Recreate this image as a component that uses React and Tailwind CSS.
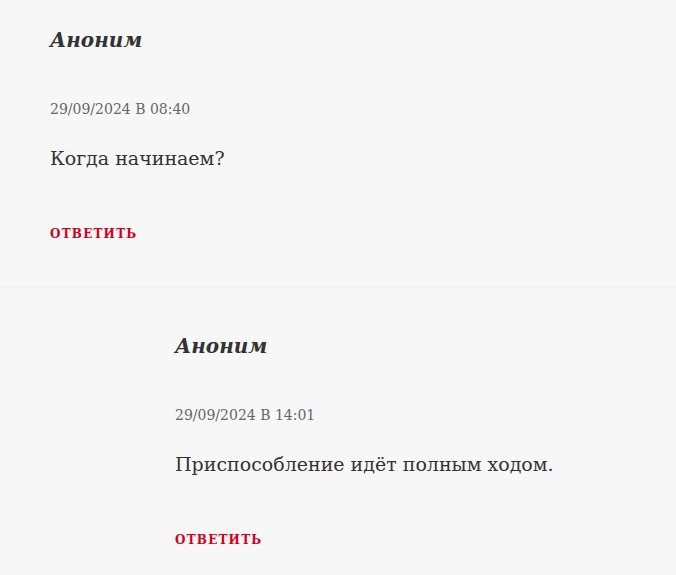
export default function App() {
  const font = { fontFamily: '"DejaVu Serif", "Liberation Serif", serif' };
  const Comment = ({ date, text }) => (
    <div className="flex flex-col">
      <div className="text-[20px] font-bold italic leading-[30px] text-[#333]">Аноним</div>
      <div className="mt-[44px] text-[14px] leading-[20px] text-[#666]">{date}</div>
      <div className="mt-[25px] text-[19px] leading-[28px] text-[#333]">{text}</div>
      <div className="mt-[54px] text-[12px] font-bold leading-[16px] tracking-[1.2px] text-[#d0021b]">ОТВЕТИТЬ</div>
    </div>
  );
  return (
    <div className="min-h-[575px] w-[676px] bg-[#f7f7f7]" style={font}>
      <div className="pl-[50px] pt-[25px] pb-[44px] border-b border-[#ececec]">
        <Comment date="29/09/2024 В 08:40" text="Когда начинаем?" />
      </div>
      <div className="pl-[175px] pt-[44px]">
        <Comment date="29/09/2024 В 14:01" text="Приспособление идёт полным ходом." />
      </div>
    </div>
  );
}
